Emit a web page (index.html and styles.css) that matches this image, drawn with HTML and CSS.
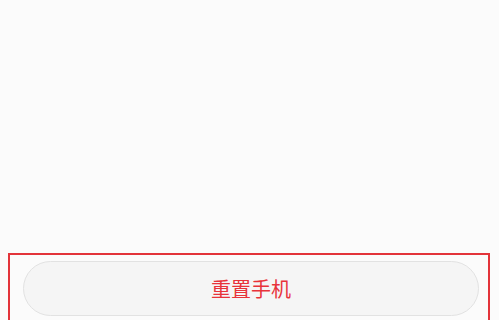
FILE: index.html
```html
<!DOCTYPE html>
<html lang="zh-CN">
<head>
    <meta charset="UTF-8">
    <meta name="viewport" content="width=device-width, initial-scale=1.0">
    <title>重置手机</title>
    <link rel="stylesheet" href="styles.css">
</head>
<body>
    <div class="page">
        <div class="content"></div>
        <div class="footer">
            <button class="reset-button">重置手机</button>
        </div>
    </div>
</body>
</html>
```

FILE: styles.css
```css
body {
    margin: 0;
    background-color: #fbfbfb;
    font-family: "Noto Sans CJK SC", "Noto Sans", sans-serif;
}

.page {
    display: flex;
    flex-direction: column;
}

.content {
    height: 253px;
}

.footer {
    margin: 0 9px 0 8px;
    padding: 6px 9px 8px 13px;
    border: 2px solid #e3343a;
}

.reset-button {
    display: block;
    width: 100%;
    height: 55px;
    background-color: #f5f5f5;
    border: 1px solid #e2e2e2;
    border-radius: 28px;
    color: #e8333a;
    font-family: "Noto Sans CJK SC", "Noto Sans", sans-serif;
    font-size: 20px;
    padding: 0;
}
```
